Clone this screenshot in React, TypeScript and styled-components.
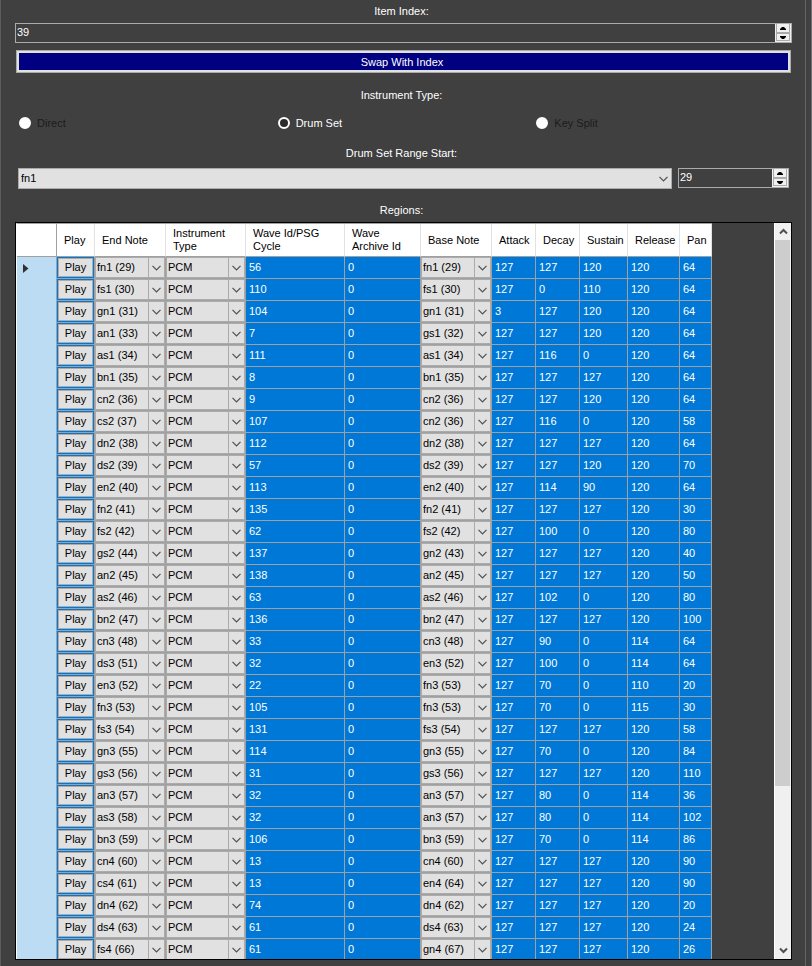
import React, { useState } from "react";
import styled, { createGlobalStyle } from "styled-components";

const GlobalStyle = createGlobalStyle`
  *, *::before, *::after { box-sizing: border-box; }
  body { margin: 0; background: #404040; overflow: hidden; }
  body, button, input, select { font: 11px/13px "Liberation Sans", Arial, sans-serif; }
`;

const Page = styled.main`
  display: flex;
  height: 100vh;
  background: #404040;
  color: #fff;
  border-left: 1px solid #5c5c5c;
  border-right: 1px solid #6f6f74;
`;

const Panel = styled.div`
  flex: 1;
  min-width: 0;
  display: flex;
  flex-direction: column;
  margin-right: 5px;
  padding: 0 13px 6px 14px;
  border-right: 1px solid #646464;
`;

const Caption = styled.label<{ $height: number; $top?: number }>`
  flex: none;
  display: flex;
  align-items: center;
  justify-content: center;
  height: ${(p) => p.$height}px;
  padding: ${(p) => p.$top ?? 0}px 4px 0 0;
`;

const NumberBox = styled.div`
  flex: none;
  display: flex;
  height: 20px;
  border: 1px solid #ababab;
`;

const NumberInput = styled.input`
  flex: 1;
  width: 100%;
  min-width: 0;
  height: 16px;
  padding: 0 1px;
  border: 0;
  outline: 0;
  background: transparent;
  color: #fff;
  font-size: 11px;
`;

const Stepper = styled.div`
  flex: none;
  display: flex;
  flex-direction: column;
  justify-content: space-between;
  width: 16px;
  padding: 0 1px 1px;
  background: #f0f0f0;
`;

const StepButton = styled.button`
  display: flex;
  align-items: center;
  justify-content: center;
  height: 8px;
  padding: 0;
  border: 1px solid #ababab;
  background: #f0f0f0;
  &:first-child { height: 9px; border-top: 0; }
`;

const SwapButton = styled.button`
  flex: none;
  height: 23px;
  margin: 7px 1px 0;
  padding: 1px 3px 0 0;
  border: 1px solid #ababab;
  box-shadow: inset 0 0 0 2px #e1e1e1;
  background: #000080;
  color: #fff;
`;

const RadioRow = styled.div`
  flex: none;
  display: grid;
  grid-template-columns: repeat(3, 1fr);
  margin-right: -3px;
  padding-left: 4px;
  height: 24px;
`;

const RadioLabel = styled.label<{ $active: boolean }>`
  display: flex;
  align-items: center;
  gap: 6px;
  color: ${(p) => (p.$active ? "#fff" : "#1c1c1c")};
`;

const Radio = styled.input`
  appearance: none;
  width: 12px;
  height: 12px;
  margin: 0;
  border: 6px solid #fff;
  border-radius: 50%;
  background: #2b2b2b;
  &:checked { border-width: 2px; }
`;

const RangeRow = styled.div`
  flex: none;
  display: grid;
  grid-template-columns: 1fr 111px;
  gap: 6px;
  margin: 0 3px;
`;

const Picker = styled.div`
  position: relative;
  display: flex;
  height: 21px;
  border: 1px solid #ababab;
  background: #e1e1e1;
`;

const PickerSelect = styled.select`
  appearance: none;
  flex: 1;
  width: 100%;
  min-width: 0;
  padding: 0 18px 0 2px;
  border: 0;
  outline: 0;
  background: transparent;
  color: #000;
`;

const PickerArrow = styled.span<{ $divided?: boolean }>`
  position: absolute;
  top: 0;
  right: 0;
  bottom: 0;
  display: flex;
  align-items: center;
  justify-content: center;
  width: 16px;
  border-left: ${(p) => (p.$divided ? "1px solid #ababab" : "0")};
  pointer-events: none;
`;

const GridFrame = styled.section`
  flex: 1;
  min-height: 0;
  display: flex;
  justify-content: space-between;
  overflow: hidden;
  border: 1px solid #000;
`;

const GridView = styled.div`
  flex: 1;
  min-width: 0;
  overflow: hidden;
`;

const Table = styled.table`
  table-layout: fixed;
  width: 696px;
  border-collapse: separate;
  border-spacing: 0;
  border-left: 1px solid #fff;
  border-top: 1px solid #a0a0a0;
`;

const Col = styled.col<{ $width: number }>`
  width: ${(p) => p.$width}px;
`;

const HeadCell = styled.th<{ $corner?: boolean }>`
  height: 33px;
  padding: 0 6px 0 7px;
  border-right: 1px solid ${(p) => (p.$corner ? "#a0a0a0" : "#e2e2e2")};
  border-bottom: 1px solid #a0a0a0;
  background: #fff;
  color: #000;
  font-weight: 400;
  text-align: left;
  white-space: pre-line;
`;

const RowHead = styled.th`
  height: 22px;
  padding: 0 0 0 6px;
  border-right: 1px solid #a0a0a0;
  background: #bcdcf4;
  text-align: left;
  svg { display: block; }
`;

const ValueCell = styled.td`
  height: 22px;
  padding: 0 3px;
  border-right: 1px solid #a0a0a0;
  border-bottom: 1px solid #a0a0a0;
  background: #0078d7;
  color: #fff;
`;

const ControlCell = styled.td<{ $blue?: boolean }>`
  height: 22px;
  padding: ${(p) => (p.$blue ? "1px" : "0")};
  border-right: 1px solid #a0a0a0;
  border-bottom: 1px solid #a0a0a0;
  background: ${(p) => (p.$blue ? "#0078d7" : "#e1e1e1")};
`;

const PlayButton = styled.button`
  display: block;
  width: 100%;
  height: 19px;
  padding: 0;
  border: 1px solid #ababab;
  background: #e1e1e1;
  color: #000;
`;

const CellPicker = styled(Picker)`
  ${PickerSelect} { padding-left: 1px; }
`;

const ScrollTrack = styled.div`
  flex: none;
  display: grid;
  grid-template-rows: 17px 546fr 156fr 17px;
  width: 17px;
  border-left: 1px solid #fff;
  background: #f0f0f0;
`;

const ScrollButton = styled.button`
  display: flex;
  align-items: center;
  justify-content: center;
  grid-row: auto;
  padding: 0;
  border: 0;
  background: #f0f0f0;
  &:last-child { grid-row: 4; }
`;

const ScrollThumb = styled.div`
  margin-right: 1px;
  background: #cdcdcd;
`;

const Chevron = () => (
  <svg width="9" height="6" viewBox="0 0 9 6" fill="none" stroke="#505050" strokeWidth="1.2">
    <path d="M0.5 0.8 4.5 4.8 8.5 0.8" />
  </svg>
);

const ScrollChevron = ({ down }: { down?: boolean }) => (
  <svg width="9" height="7" viewBox="0 0 9 7" fill="none" stroke="#505050" strokeWidth="2">
    <path d={down ? "M1 1.5 4.5 5 8 1.5" : "M1 5.5 4.5 2 8 5.5"} />
  </svg>
);

const Triangle = ({ down }: { down?: boolean }) => (
  <svg width="6" height="3" viewBox="0 0 6 3" fill="#000">
    <path d={down ? "M0 0h6v1L4 3H2L0 1z" : "M0 3h6V2L4 0H2L0 2z"} />
  </svg>
);

type NumberFieldProps = { id?: string; label?: string; initial: number };

const NumberField = ({ id, label, initial }: NumberFieldProps) => {
  const [value, setValue] = useState(initial);
  return (
    <NumberBox>
      <NumberInput
        id={id}
        aria-label={label}
        inputMode="numeric"
        value={value}
        onChange={(e) => setValue(Number(e.target.value) || 0)}
      />
      <Stepper>
        <StepButton aria-label="Increase" onClick={() => setValue(value + 1)}><Triangle /></StepButton>
        <StepButton aria-label="Decrease" onClick={() => setValue(value - 1)}><Triangle down /></StepButton>
      </Stepper>
    </NumberBox>
  );
};

const CellSelect = ({ label, value }: { label: string; value: string }) => (
  <CellPicker>
    <PickerSelect aria-label={label} defaultValue={value}>
      <option>{value}</option>
    </PickerSelect>
    <PickerArrow $divided><Chevron /></PickerArrow>
  </CellPicker>
);

const columns: [string, number][] = [
  ["", 40], ["Play", 38], ["End Note", 71], ["Instrument\nType", 80], ["Wave Id/PSG\nCycle", 99],
  ["Wave\nArchive Id", 76], ["Base Note", 71], ["Attack", 44], ["Decay", 44], ["Sustain", 48],
  ["Release", 52], ["Pan", 32],
];

// end note, wave id, base note, attack, decay, sustain, release, pan
const regions: [string, number, string, number, number, number, number, number][] = [
  ["fn1 (29)", 56, "fn1 (29)", 127, 127, 120, 120, 64],
  ["fs1 (30)", 110, "fs1 (30)", 127, 0, 110, 120, 64],
  ["gn1 (31)", 104, "gn1 (31)", 3, 127, 120, 120, 64],
  ["an1 (33)", 7, "gs1 (32)", 127, 127, 120, 120, 64],
  ["as1 (34)", 111, "as1 (34)", 127, 116, 0, 120, 64],
  ["bn1 (35)", 8, "bn1 (35)", 127, 127, 127, 120, 64],
  ["cn2 (36)", 9, "cn2 (36)", 127, 127, 120, 120, 64],
  ["cs2 (37)", 107, "cn2 (36)", 127, 116, 0, 120, 58],
  ["dn2 (38)", 112, "dn2 (38)", 127, 127, 127, 120, 64],
  ["ds2 (39)", 57, "ds2 (39)", 127, 127, 120, 120, 70],
  ["en2 (40)", 113, "en2 (40)", 127, 114, 90, 120, 64],
  ["fn2 (41)", 135, "fn2 (41)", 127, 127, 127, 120, 30],
  ["fs2 (42)", 62, "fs2 (42)", 127, 100, 0, 120, 80],
  ["gs2 (44)", 137, "gn2 (43)", 127, 127, 127, 120, 40],
  ["an2 (45)", 138, "an2 (45)", 127, 127, 127, 120, 50],
  ["as2 (46)", 63, "as2 (46)", 127, 102, 0, 120, 80],
  ["bn2 (47)", 136, "bn2 (47)", 127, 127, 127, 120, 100],
  ["cn3 (48)", 33, "cn3 (48)", 127, 90, 0, 114, 64],
  ["ds3 (51)", 32, "en3 (52)", 127, 100, 0, 114, 64],
  ["en3 (52)", 22, "fn3 (53)", 127, 70, 0, 110, 20],
  ["fn3 (53)", 105, "fn3 (53)", 127, 70, 0, 115, 30],
  ["fs3 (54)", 131, "fs3 (54)", 127, 127, 127, 120, 58],
  ["gn3 (55)", 114, "gn3 (55)", 127, 70, 0, 120, 84],
  ["gs3 (56)", 31, "gs3 (56)", 127, 127, 127, 120, 110],
  ["an3 (57)", 32, "an3 (57)", 127, 80, 0, 114, 36],
  ["as3 (58)", 32, "an3 (57)", 127, 80, 0, 114, 102],
  ["bn3 (59)", 106, "bn3 (59)", 127, 70, 0, 114, 86],
  ["cn4 (60)", 13, "cn4 (60)", 127, 127, 127, 120, 90],
  ["cs4 (61)", 13, "en4 (64)", 127, 127, 127, 120, 90],
  ["dn4 (62)", 74, "dn4 (62)", 127, 127, 127, 120, 20],
  ["ds4 (63)", 61, "ds4 (63)", 127, 127, 127, 120, 24],
  ["fs4 (66)", 61, "gn4 (67)", 127, 127, 127, 120, 26],
];

const types = ["Direct", "Drum Set", "Key Split"];

export default function App() {
  const [type, setType] = useState("Drum Set");
  return (
    <>
      <GlobalStyle />
      <Page>
        <Panel>
          <Caption $height={23} htmlFor="item-index">Item Index:</Caption>
          <NumberField id="item-index" initial={39} />
          <SwapButton>Swap With Index</SwapButton>
          <Caption as="div" id="type-caption" $height={38} $top={6}>Instrument Type:</Caption>
          <RadioRow role="radiogroup" aria-labelledby="type-caption">
            {types.map((name) => (
              <RadioLabel key={name} $active={type === name}>
                <Radio type="radio" name="type" checked={type === name} onChange={() => setType(name)} />
                {name}
              </RadioLabel>
            ))}
          </RadioRow>
          <Caption $height={33} $top={4} htmlFor="range-start">Drum Set Range Start:</Caption>
          <RangeRow>
            <Picker>
              <PickerSelect id="range-start" defaultValue="fn1">
                <option>fn1</option>
              </PickerSelect>
              <PickerArrow><Chevron /></PickerArrow>
            </Picker>
            <NumberField label="Range start value" initial={29} />
          </RangeRow>
          <Caption as="div" id="regions-caption" $height={33} $top={10}>Regions:</Caption>
          <GridFrame>
            <GridView>
              <Table aria-labelledby="regions-caption">
                <colgroup>
                  {columns.map(([name, width]) => <Col key={name} $width={width} />)}
                </colgroup>
                <thead>
                  <tr>
                    {columns.map(([name], i) => <HeadCell key={name} scope="col" $corner={i === 0}>{name}</HeadCell>)}
                  </tr>
                </thead>
                <tbody>
                  {regions.map(([end, wave, base, ...rest], i) => (
                    <tr key={end}>
                      <RowHead scope="row">
                        {i === 0 && (
                          <svg width="6" height="9" viewBox="0 0 6 9" fill="#303030"><path d="M0 0 5.5 4.5 0 9z" /></svg>
                        )}
                      </RowHead>
                      <ControlCell $blue><PlayButton>Play</PlayButton></ControlCell>
                      <ControlCell><CellSelect label="End note" value={end} /></ControlCell>
                      <ControlCell><CellSelect label="Instrument type" value="PCM" /></ControlCell>
                      <ValueCell>{wave}</ValueCell>
                      <ValueCell>0</ValueCell>
                      <ControlCell><CellSelect label="Base note" value={base} /></ControlCell>
                      {rest.map((value, k) => <ValueCell key={k}>{value}</ValueCell>)}
                    </tr>
                  ))}
                </tbody>
              </Table>
            </GridView>
            <ScrollTrack>
              <ScrollButton aria-label="Scroll up"><ScrollChevron /></ScrollButton>
              <ScrollThumb />
              <ScrollButton aria-label="Scroll down"><ScrollChevron down /></ScrollButton>
            </ScrollTrack>
          </GridFrame>
        </Panel>
      </Page>
    </>
  );
}
